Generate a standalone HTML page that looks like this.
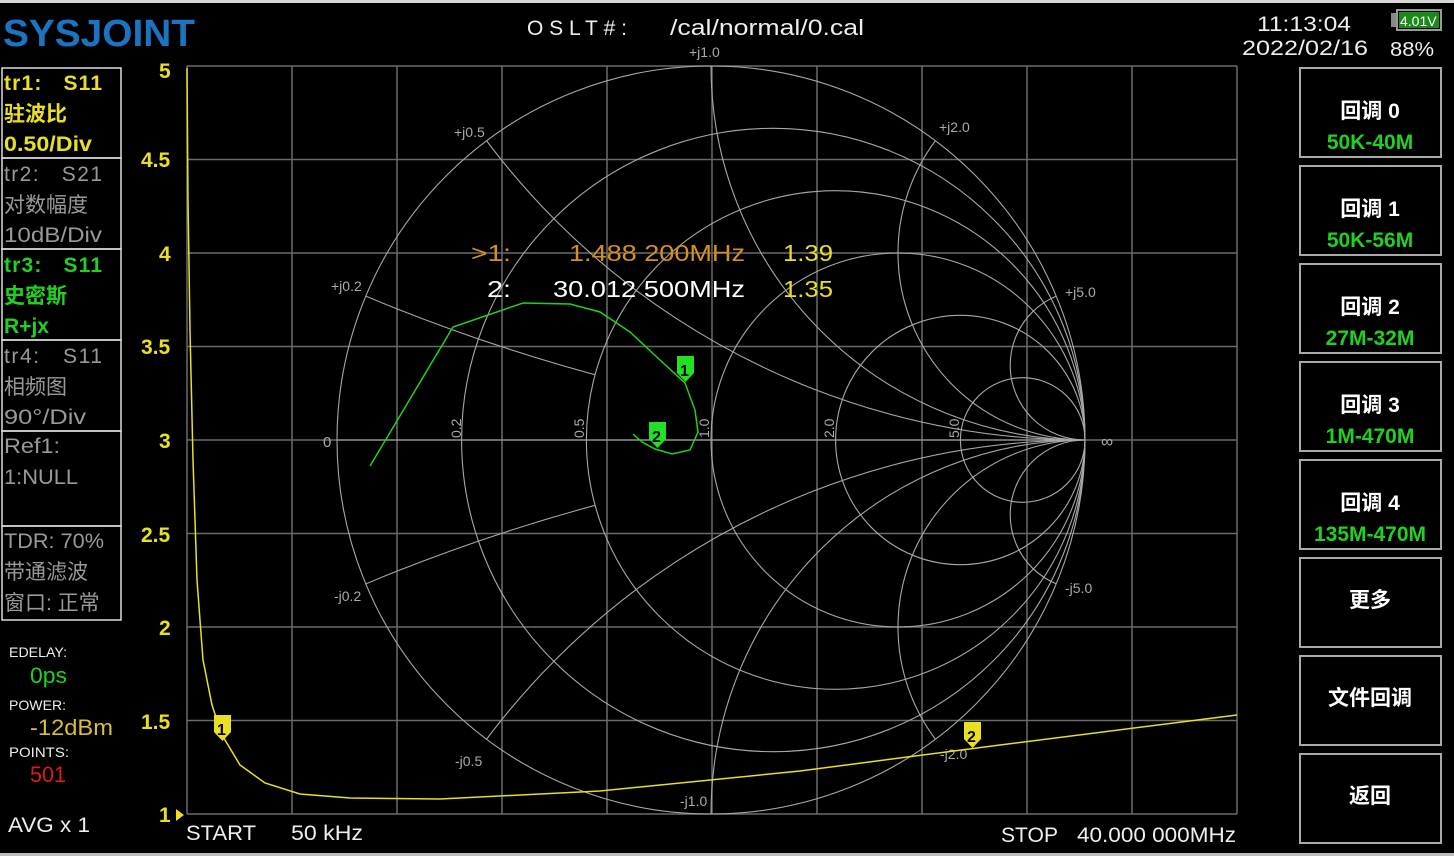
<!DOCTYPE html>
<html><head><meta charset="utf-8"><style>
html,body{margin:0;padding:0;background:#000;width:1454px;height:856px;overflow:hidden}
svg{display:block}
text{font-family:"Liberation Sans","Noto Sans CJK SC",sans-serif}
</style></head><body>
<svg width="1454" height="856" viewBox="0 0 1454 856" xmlns="http://www.w3.org/2000/svg">
<defs>
<clipPath id="uc"><circle cx="711" cy="440" r="374"/></clipPath>
<mask id="m02"><rect width="1454" height="856" fill="#000"/><circle cx="711" cy="440" r="374" fill="#fff"/><circle cx="835.7" cy="440" r="249.3" fill="#000"/></mask>
</defs>
<rect width="1454" height="856" fill="#000"/>
<rect x="0" y="0" width="1454" height="3" fill="#d8d8d8"/>
<rect x="0" y="853" width="1454" height="3" fill="#bdbdbd"/>
<text x="3" y="46" font-size="38" font-weight="bold" fill="#1b74c2" textLength="192" lengthAdjust="spacingAndGlyphs">SYSJOINT</text>
<text x="527" y="35" font-size="21" fill="#eee" textLength="100" lengthAdjust="spacing">OSLT#:</text>
<text x="670" y="35" font-size="22" fill="#eee" textLength="194" lengthAdjust="spacingAndGlyphs">/cal/normal/0.cal</text>
<text x="1257" y="31" font-size="21" fill="#eee" textLength="94" lengthAdjust="spacingAndGlyphs">11:13:04</text>
<text x="1242" y="55" font-size="21" fill="#eee" textLength="126" lengthAdjust="spacingAndGlyphs">2022/02/16</text>
<text x="1390" y="56" font-size="20" fill="#eee" textLength="44" lengthAdjust="spacingAndGlyphs">88%</text>
<rect x="1391" y="13" width="6" height="14" fill="#888"/>
<rect x="1397" y="10" width="44" height="20" fill="none" stroke="#999" stroke-width="2"/>
<rect x="1399" y="12" width="40" height="16" fill="#1a8a1a"/>
<text x="1400" y="26" font-size="14" fill="#fff">4.01V</text>
<g stroke="#6a6a6a" stroke-width="1.5" fill="none">
<path d="M187,66V814M292,66V814M397,66V814M502,66V814M607,66V814M712,66V814M817,66V814M922,66V814M1027,66V814M1132,66V814M1237,66V814"/>
<path d="M187,66H1237M187,159.5H1237M187,253H1237M187,346.5H1237M187,440H1237M187,533.5H1237M187,627H1237M187,720.5H1237M187,814H1237"/>
</g>
<g fill="#e8e020" font-size="21" font-weight="bold">
<text x="159" y="78">5</text><text x="141" y="167">4.5</text><text x="159" y="261">4</text>
<text x="141" y="354">3.5</text><text x="159" y="448">3</text><text x="141" y="542">2.5</text>
<text x="159" y="635">2</text><text x="141" y="729">1.5</text><text x="159" y="822">1</text>
</g>
<path d="M176,809 L184,815 L176,821Z" fill="#e8e020"/>
<g stroke="#a8a8a8" stroke-width="1.1" fill="none">
<circle cx="711" cy="440" r="374"/>
<line x1="337" y1="440" x2="1085" y2="440"/>
<circle cx="773.3" cy="440" r="311.7"/>
<circle cx="835.7" cy="440" r="249.3"/>
<circle cx="898" cy="440" r="187"/>
<circle cx="960.3" cy="440" r="124.7"/>
<circle cx="1022.7" cy="440" r="62.3"/>
<g clip-path="url(#uc)">
<circle cx="1085" cy="-308" r="748"/><circle cx="1085" cy="1188" r="748"/>
<circle cx="1085" cy="66" r="374"/><circle cx="1085" cy="814" r="374"/>
<circle cx="1085" cy="253" r="187"/><circle cx="1085" cy="627" r="187"/>
<circle cx="1085" cy="365.2" r="74.8"/><circle cx="1085" cy="514.8" r="74.8"/>
</g>
<g mask="url(#m02)">
<circle cx="1085" cy="-1430" r="1870"/><circle cx="1085" cy="2310" r="1870"/>
</g>
</g>
<g fill="#aaa" font-size="14">
<text x="689" y="57">+j1.0</text>
<text x="454" y="137">+j0.5</text>
<text x="939" y="132">+j2.0</text>
<text x="331" y="291">+j0.2</text>
<text x="1065" y="297">+j5.0</text>
<text x="323" y="447" font-size="15">0</text>
<text x="1101" y="447" font-size="17">∞</text>
<text x="334" y="601">-j0.2</text>
<text x="1065" y="593">-j5.0</text>
<text x="455" y="766">-j0.5</text>
<text x="940" y="759">-j2.0</text>
<text x="680" y="806">-j1.0</text>
<text transform="translate(461,438) rotate(-90)">0.2</text>
<text transform="translate(584,438) rotate(-90)">0.5</text>
<text transform="translate(709,438) rotate(-90)">1.0</text>
<text transform="translate(834,438) rotate(-90)">2.0</text>
<text transform="translate(959,438) rotate(-90)">5.0</text>
</g>
<g font-size="23">
<text x="471" y="261" fill="#d6901e" textLength="40" lengthAdjust="spacingAndGlyphs">&gt;1:</text>
<text x="569" y="261" fill="#d6901e" textLength="176" lengthAdjust="spacingAndGlyphs">1.488 200MHz</text>
<text x="783" y="261" fill="#e8e020" textLength="50" lengthAdjust="spacingAndGlyphs">1.39</text>
<text x="487" y="297" fill="#fff" textLength="24" lengthAdjust="spacingAndGlyphs">2:</text>
<text x="553" y="297" fill="#fff" textLength="192" lengthAdjust="spacingAndGlyphs">30.012 500MHz</text>
<text x="783" y="297" fill="#e8e020" textLength="50" lengthAdjust="spacingAndGlyphs">1.35</text>
</g>
<polyline fill="none" stroke="#22d022" stroke-width="1.5" points="370,466 453,327 523,303 570,304 600,312 630,332 660,360 685,383 695,410 698,432 690,450 672,454 655,449 642,442 633,434"/>
<path d="M677,356h17v17l-8.5,9l-8.5,-9z" fill="#22e022"/>
<text x="680" y="376" font-size="16" font-weight="bold" fill="#000">1</text>
<path d="M649,422h17v17l-8.5,9l-8.5,-9z" fill="#22e022"/>
<text x="652" y="442" font-size="16" font-weight="bold" fill="#000">2</text>
<polyline fill="none" stroke="#e8e020" stroke-width="1.5" points="187,68 188,200 190,330 193,460 197,580 203,660 212,705 222,735 240,765 265,783 300,794 350,798 440,799 600,791 800,771 1000,745 1237,715"/>
<path d="M214,715h17v17l-8.5,9l-8.5,-9z" fill="#e8e020"/>
<text x="217" y="735" font-size="16" font-weight="bold" fill="#000">1</text>
<path d="M964,722h17v17l-8.5,9l-8.5,-9z" fill="#e8e020"/>
<text x="967" y="742" font-size="16" font-weight="bold" fill="#000">2</text>
<g fill="#eee" font-size="21">
<text x="186" y="840" textLength="70" lengthAdjust="spacingAndGlyphs">START</text>
<text x="291" y="840" textLength="72" lengthAdjust="spacingAndGlyphs">50 kHz</text>
<text x="1001" y="842" textLength="57" lengthAdjust="spacingAndGlyphs">STOP</text>
<text x="1077" y="842" textLength="159" lengthAdjust="spacingAndGlyphs">40.000 000MHz</text>
</g>
<g fill="none" stroke="#ddd" stroke-width="1.5">
<rect x="2" y="68" width="119" height="90"/>
<rect x="2" y="158" width="119" height="91"/>
<rect x="2" y="249" width="119" height="91"/>
<rect x="2" y="340" width="119" height="91"/>
<rect x="2" y="431" width="119" height="95"/>
<rect x="2" y="526" width="119" height="94"/>
</g>
<g font-size="21">
<text x="4" y="90" fill="#e8e020" font-weight="bold" textLength="98" lengthAdjust="spacing">tr1:&#160;&#160; S11</text>
<text x="4" y="121" fill="#e8e020" font-weight="bold">驻波比</text>
<text x="4" y="151" fill="#e8e020" font-weight="bold" textLength="88" lengthAdjust="spacingAndGlyphs">0.50/Div</text>
<text x="4" y="181" fill="#999" textLength="98" lengthAdjust="spacing">tr2:&#160;&#160; S21</text>
<text x="4" y="212" fill="#999">对数幅度</text>
<text x="4" y="242" fill="#999" textLength="98" lengthAdjust="spacingAndGlyphs">10dB/Div</text>
<text x="4" y="272" fill="#22d022" font-weight="bold" textLength="98" lengthAdjust="spacing">tr3:&#160;&#160; S11</text>
<text x="4" y="303" fill="#22d022" font-weight="bold">史密斯</text>
<text x="4" y="333" fill="#22d022" font-weight="bold" textLength="45" lengthAdjust="spacingAndGlyphs">R+jx</text>
<text x="4" y="363" fill="#999" textLength="98" lengthAdjust="spacing">tr4:&#160;&#160; S11</text>
<text x="4" y="394" fill="#999">相频图</text>
<text x="4" y="424" fill="#999" textLength="82" lengthAdjust="spacingAndGlyphs">90°/Div</text>
<text x="4" y="453" fill="#999" textLength="56" lengthAdjust="spacingAndGlyphs">Ref1:</text>
<text x="4" y="484" fill="#999" textLength="74" lengthAdjust="spacingAndGlyphs">1:NULL</text>
<text x="4" y="548" fill="#999" textLength="100" lengthAdjust="spacingAndGlyphs">TDR: 70%</text>
<text x="4" y="579" fill="#999">带通滤波</text>
<text x="4" y="610" fill="#999">窗口: 正常</text>
</g>
<g font-size="14" fill="#eee">
<text x="9" y="657" textLength="58" lengthAdjust="spacingAndGlyphs">EDELAY:</text>
<text x="9" y="710" textLength="57" lengthAdjust="spacingAndGlyphs">POWER:</text>
<text x="9" y="757" textLength="60" lengthAdjust="spacingAndGlyphs">POINTS:</text>
</g>
<text x="30" y="683" font-size="22" fill="#22d022" textLength="37" lengthAdjust="spacingAndGlyphs">0ps</text>
<text x="30" y="735" font-size="22" fill="#d8c030" textLength="83" lengthAdjust="spacingAndGlyphs">-12dBm</text>
<text x="30" y="782" font-size="22" fill="#e01818" textLength="36" lengthAdjust="spacingAndGlyphs">501</text>
<text x="8" y="832" font-size="21" fill="#eee" textLength="82" lengthAdjust="spacingAndGlyphs">AVG x 1</text>
<g fill="none" stroke="#aaa" stroke-width="2">
<rect x="1300" y="68" width="141" height="89"/>
<rect x="1300" y="166" width="141" height="89"/>
<rect x="1300" y="264" width="141" height="89"/>
<rect x="1300" y="362" width="141" height="89"/>
<rect x="1300" y="460" width="141" height="89"/>
<rect x="1300" y="558" width="141" height="89"/>
<rect x="1300" y="656" width="141" height="89"/>
<rect x="1300" y="754" width="141" height="89"/>
</g>
<g font-size="21" text-anchor="middle" font-weight="bold">
<text x="1370" y="118" fill="#fff">回调 0</text><text x="1370" y="149" fill="#22d022">50K-40M</text>
<text x="1370" y="216" fill="#fff">回调 1</text><text x="1370" y="247" fill="#22d022">50K-56M</text>
<text x="1370" y="314" fill="#fff">回调 2</text><text x="1370" y="345" fill="#22d022">27M-32M</text>
<text x="1370" y="412" fill="#fff">回调 3</text><text x="1370" y="443" fill="#22d022">1M-470M</text>
<text x="1370" y="510" fill="#fff">回调 4</text><text x="1370" y="541" fill="#22d022">135M-470M</text>
<text x="1370" y="607" fill="#fff">更多</text>
<text x="1370" y="705" fill="#fff">文件回调</text>
<text x="1370" y="803" fill="#fff">返回</text>
</g>
</svg>
</body></html>
